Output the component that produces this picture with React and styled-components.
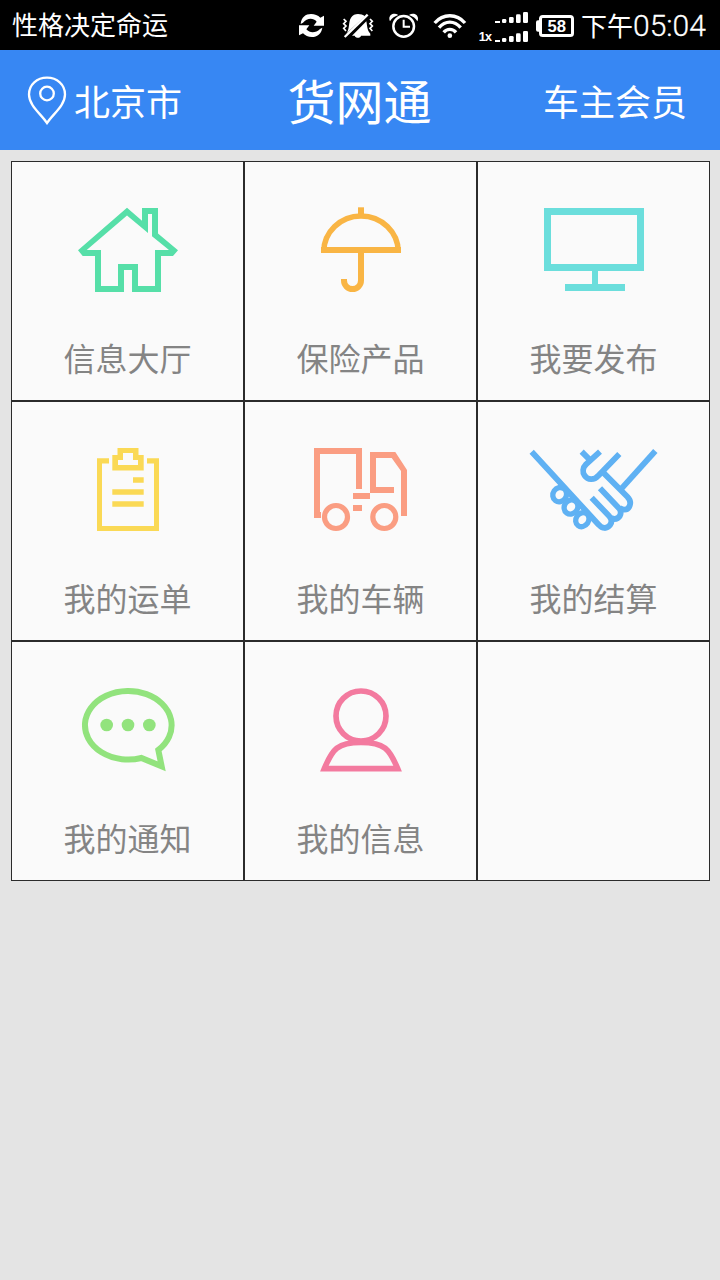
import React from "react";
import styled, { createGlobalStyle } from "styled-components";

const GlobalStyle = createGlobalStyle`
  * { box-sizing: border-box; }
  body {
    margin: 0;
    background: #e4e4e4;
    font-family: "Noto Sans CJK SC", sans-serif;
  }
`;

const Screen = styled.div`
  width: 720px;
  min-height: 1280px;
  background: #e4e4e4;
  display: flex;
  flex-direction: column;
`;

const StatusBar = styled.div`
  height: 50px;
  background: #000;
  color: #fff;
  display: flex;
  align-items: center;
  padding: 0 12px;
`;

const Notice = styled.span`
  flex: 1;
  font-size: 26px;
  line-height: 48px;
  padding-bottom: 2px;
`;

const StatusIcon = styled.svg`
  flex: none;
  display: block;
  margin-right: ${(p) => p.$gap}px;
`;

const Clock = styled.span`
  width: 127px;
  display: flex;
  align-items: center;
  white-space: nowrap;
  line-height: 50px;
  font-size: 26px;
`;

const Digits = styled.span`
  font-family: Roboto, "Liberation Sans", sans-serif;
  font-size: 30px;
  font-weight: 300;
  padding-top: 2px;
  -webkit-text-stroke: 0.3px #fff;
`;

const Header = styled.header`
  height: 100px;
  background: #3787f3;
  color: #fff;
  display: grid;
  grid-template-columns: 1fr auto 1fr;
  align-items: center;
  padding: 0 33px 0 27px;
`;

const City = styled.div`
  display: flex;
  align-items: center;
  gap: 7px;
  font-size: 36px;
  line-height: 100px;
`;

const Title = styled.h1`
  margin: 0;
  padding: 0 0 2px 5px;
  font-size: 48px;
  font-weight: 400;
  line-height: 98px;
`;

const Member = styled.div`
  font-size: 36px;
  line-height: 100px;
  text-align: right;
`;

const Grid = styled.main`
  display: grid;
  grid-template-columns: repeat(3, 233px);
  grid-auto-rows: 240px;
  margin: 11px 0 0 11px;
`;

const Cell = styled.div`
  border: 1px solid #2b2b2b;
  background: #fafafa;
  display: flex;
  flex-direction: column;
  align-items: center;
  padding-top: 38px;
`;

const TileIcon = styled.svg`
  flex: none;
  display: block;
  color: ${(p) => p.$color};
`;

const Label = styled.span`
  margin-top: 33px;
  font-size: 32px;
  line-height: 48px;
  font-weight: 400;
  color: #848484;
`;

const House = () => (
  <path
    fill="currentColor"
    fillRule="evenodd"
    d="M70 7.7L85 20.8V8H101V33.5L121 50.3L116 56H104V92H75V70H67V92H38V56H25.7L21 50.3Z M70 15.5L91 33V14H95V36.3L112 50H98V86H81V64H61V86H44V50H29.7Z"
  />
);

const Umbrella = () => (
  <g>
    <path fill="currentColor" d="M68 7.3H74V15H68Z" />
    <path fill="none" stroke="currentColor" strokeWidth="5.5" d="M33.7 52A37.3 36 0 0 1 108.3 52" />
    <path fill="currentColor" d="M31 47H111V53H31Z" />
    <path fill="none" stroke="currentColor" strokeWidth="6" d="M71 53V80.5A8.5 8.5 0 0 1 54 80.5V79" />
  </g>
);

const Monitor = () => (
  <path
    fill="currentColor"
    fillRule="evenodd"
    d="M21 8H121V71H21Z M28 15V64H114V15Z M69 71H75V84H102V91H42V84H69Z"
  />
);

const Clipboard = () => (
  <path
    fill="currentColor"
    fillRule="evenodd"
    d="M40 18.3H52V23.5H45V86H97V23.5H90V18.3H102V91H40Z M55.3 15H60.5V8H81.500V15H86.700V30.5H55.3Z M61 20V25H81V20H76V13H66V20Z M76 37.300H86.700V42.700H76Z M55.3 49.3H86.700V54.7H55.3Z M55.3 61.3H86.700V66.7H55.3Z"
  />
);

const Truck = () => (
  <g>
    <path
      fill="currentColor"
      fillRule="evenodd"
      d="M24 8H72V49H66V14H30V72H31V78H24Z M63 53H80V59H63Z M63 65H72V71H63Z M80 12H105.3L117 30V76H111V31L101.7 18H86V47H104V53H80Z"
    />
    <g fill="none" stroke="currentColor" strokeWidth="5.2">
      <circle cx="46" cy="77" r="11.5" />
      <circle cx="94.3" cy="77" r="11.5" />
    </g>
  </g>
);

const Handshake = () => (
  <g transform="translate(-3 -5) scale(.33333)" fill="none" stroke="currentColor" strokeWidth="17.5">
    <path d="M35 50L236 269C247 282 261 282 270 270C277 260 276 252 268 244L215 188" />
    <path d="M240 160L299 222C307 236 298 252 283 252Q277 252 272 247" />
    <path d="M250 113L322 185C340 204 326 224 314 224Q306 224 299 218" />
    <path d="M406 48L305 160" />
    <path d="M298 57L235 122C222 137 203 135 194 122C187 112 188 98 198 88L240 50" />
    <path d="M185 50L211 76" />
    <ellipse cx="119" cy="179" rx="20" ry="22" transform="rotate(35 119 179)" strokeWidth="16" />
    <ellipse cx="153" cy="216" rx="20" ry="22" transform="rotate(35 153 216)" strokeWidth="16" />
    <ellipse cx="187" cy="254" rx="19" ry="22" transform="rotate(35 187 254)" strokeWidth="16" />
  </g>
);

const Bubble = () => (
  <g transform="translate(13 -10) scale(.33333)">
    <path
      fill="none"
      stroke="currentColor"
      strokeWidth="18"
      strokeMiterlimit="8"
      d="M214 264A130 103 0 1 1 265 240L275 289Z"
    />
    <g fill="currentColor">
      <circle cx="110" cy="165" r="19" />
      <circle cx="174" cy="165" r="19" />
      <circle cx="238" cy="165" r="19" />
    </g>
  </g>
);

const Person = () => (
  <g transform="translate(10 -10) scale(.33333)" fill="none" stroke="currentColor" strokeWidth="17">
    <circle cx="183" cy="138" r="75" />
    <path d="M73 296C97 238 112 217 183 217S269 238 293 296Z" />
  </g>
);

const tiles = [
  { label: "信息大厅", color: "#56dfa8", Icon: House },
  { label: "保险产品", color: "#f9b544", Icon: Umbrella },
  { label: "我要发布", color: "#6bdedc", Icon: Monitor },
  { label: "我的运单", color: "#fad955", Icon: Clipboard },
  { label: "我的车辆", color: "#fa9d82", Icon: Truck },
  { label: "我的结算", color: "#5fb1f3", Icon: Handshake },
  { label: "我的通知", color: "#92e37d", Icon: Bubble },
  { label: "我的信息", color: "#f37a9f", Icon: Person },
  null,
];

const SyncIcon = () => (
  <StatusIcon $gap={16} width="28" height="28" viewBox="24 33 84 84">
    <g fill="#fff">
      <path d="M32 72C34 51 47 42 63 42C74 42 84 46 91 53L102 47V77H71L80 65C69 52 51 54 39 68Z" />
      <path d="M97 83C94 102 81 111 66 111C54 111 46 107 39 100L27 106V76H58L49 88C60 101 78 99 90 87Z" />
    </g>
  </StatusIcon>
);

const MutedBellIcon = () => (
  <StatusIcon $gap={14} width="32" height="28" viewBox="156 33 96 84">
    <path fill="#fff" d="M167 103C181 88 174 66 183 53C188 45 196 42 204 42C212 42 219 44 225 49Z" />
    <path fill="#fff" d="M229 64C232 78 231 91 241 101V107H213C211 115 197 115 194 107H186Z" />
    <path stroke="#fff" strokeWidth="7" d="M164 111L233 44" />
    <path
      fill="none"
      stroke="#fff"
      strokeWidth="5"
      d="M161 57L168 64L161 71L168 78L161 85L168 93M240 57L247 64L240 71L247 78L240 85L247 93"
    />
  </StatusIcon>
);

const AlarmIcon = () => (
  <StatusIcon $gap={14} width="31" height="28" viewBox="293 33 93 84">
    <g fill="none" stroke="#fff">
      <circle cx="340" cy="79" r="31" strokeWidth="7.5" />
      <path strokeWidth="6" d="M340 59V80H359" />
    </g>
    <path fill="#fff" d="M299 64C291 48 308 35 324 45Q306 51 299 64Z M381 64C389 48 372 35 356 45Q374 51 381 64Z" />
  </StatusIcon>
);

const WifiIcon = () => (
  <StatusIcon $gap={11} width="34" height="28" viewBox="429 33 102 84">
    <g fill="none" stroke="#fff" strokeWidth="10">
      <path d="M434 69C459 40 500 40 525 69" />
      <path d="M447 83C466 61 493 61 512 83" />
      <path d="M461 97C471 85 488 85 498 97" />
    </g>
    <circle cx="479.5" cy="107" r="7" fill="#fff" />
  </StatusIcon>
);

const SignalIcon = () => (
  <StatusIcon $gap={7} width="51" height="32" viewBox="564 27 153 96" overflow="visible">
    <g fill="#fff">
      <rect x="615" y="63" width="15" height="6" />
      <rect x="636" y="57" width="13" height="12" rx="4" />
      <rect x="657" y="51" width="14" height="18" rx="4" />
      <rect x="678" y="43" width="14" height="26" rx="4" />
      <rect x="699" y="36" width="15" height="33" rx="4" />
      <rect x="615" y="120" width="15" height="6" />
      <rect x="636" y="114" width="13" height="12" rx="4" />
      <rect x="657" y="108" width="14" height="18" rx="4" />
      <rect x="678" y="100" width="14" height="26" rx="4" />
      <rect x="699" y="93" width="15" height="33" rx="4" />
      <text x="566" y="124" fontFamily="Liberation Sans, sans-serif" fontWeight="700" fontSize="38" textLength="40">
        1x
      </text>
    </g>
  </StatusIcon>
);

const BatteryIcon = () => (
  <StatusIcon $gap={6} width="39" height="24" viewBox="48 42 117 72" overflow="visible">
    <rect x="48" y="64" width="14" height="34" rx="6" fill="#fff" />
    <rect x="61.5" y="52.5" width="96" height="57" rx="7" fill="#000" stroke="#fff" strokeWidth="9" />
    <text
      x="110"
      y="99"
      textAnchor="middle"
      fill="#fff"
      fontFamily="Liberation Sans, sans-serif"
      fontWeight="700"
      fontSize="50"
    >
      58
    </text>
  </StatusIcon>
);

const PinIcon = () => (
  <svg width="40" height="50" viewBox="0 0 40 50" fill="none" stroke="#fff" strokeWidth="2.3">
    <path d="M20 48C14 39 2 30.5 2 19.5C2 9.5 10 2.7 20 2.7S38 9.5 38 19.5C38 30.5 26 39 20 48Z" />
    <circle cx="20" cy="18.5" r="6.8" />
  </svg>
);

export default function App() {
  return (
    <Screen>
      <GlobalStyle />
      <StatusBar>
        <Notice>性格决定命运</Notice>
        <SyncIcon />
        <MutedBellIcon />
        <AlarmIcon />
        <WifiIcon />
        <SignalIcon />
        <BatteryIcon />
        <Clock>
          下午<Digits>05:04</Digits>
        </Clock>
      </StatusBar>
      <Header>
        <City>
          <PinIcon />
          北京市
        </City>
        <Title>货网通</Title>
        <Member>车主会员</Member>
      </Header>
      <Grid>
        {tiles.map((tile, i) => (
          <Cell key={i}>
            {tile && (
              <>
                <TileIcon $color={tile.color} width="141" height="100" viewBox="0 0 141 100">
                  <tile.Icon />
                </TileIcon>
                <Label>{tile.label}</Label>
              </>
            )}
          </Cell>
        ))}
      </Grid>
    </Screen>
  );
}
